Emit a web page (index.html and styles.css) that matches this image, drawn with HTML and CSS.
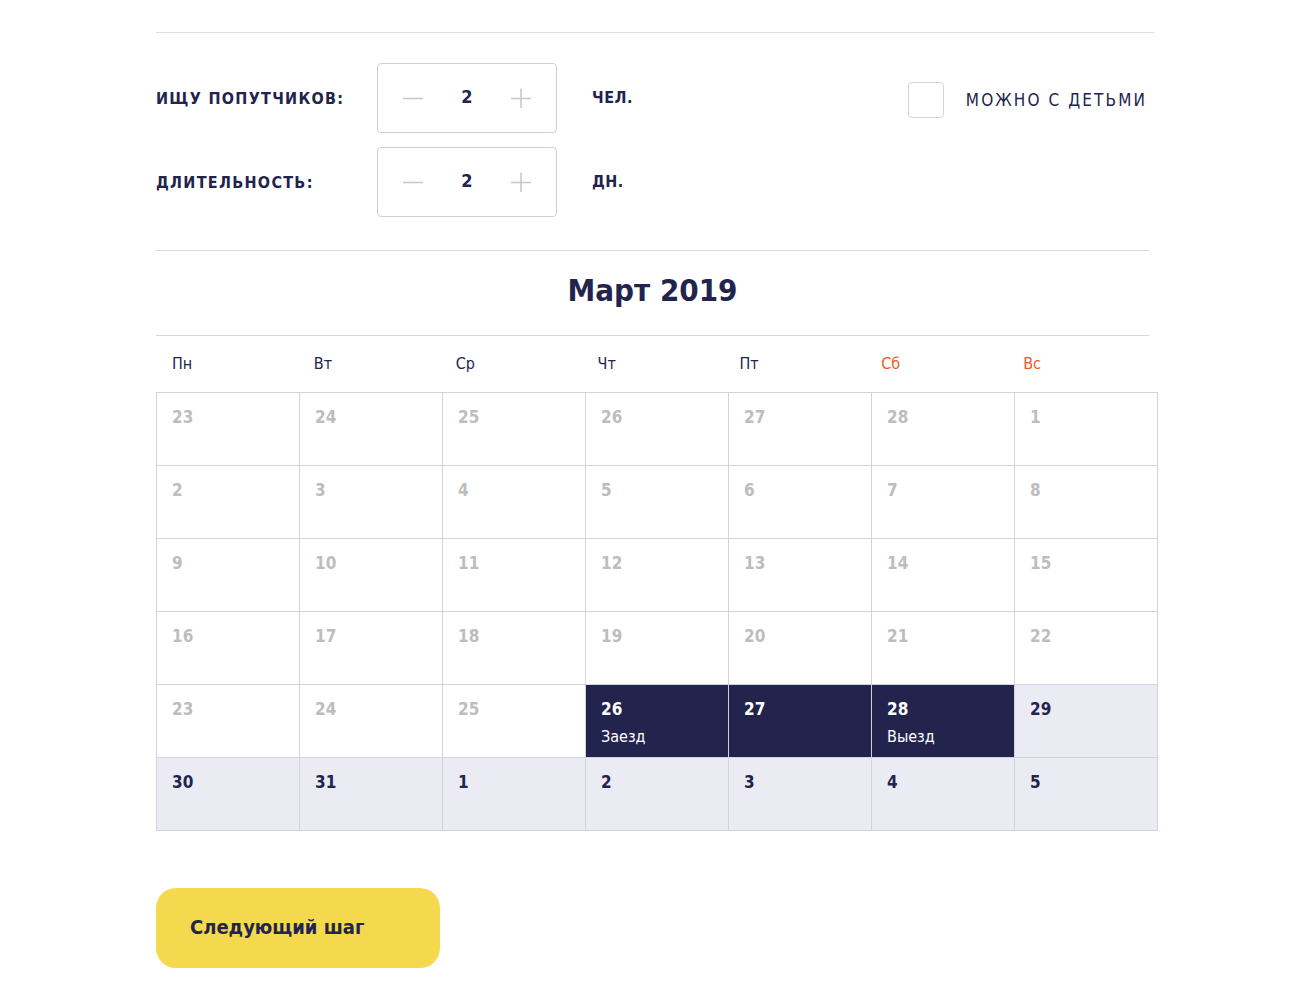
FILE: index.html
```html
<!DOCTYPE html>
<html lang="ru">
<head>
<meta charset="utf-8">
<title>Календарь</title>
<link rel="stylesheet" href="styles.css">
</head>
<body>
<div class="page">
  <div class="rule rule-top"></div>
  <div class="params">
    <div class="param-row">
      <div class="label">Ищу попутчиков:</div>
      <div class="stepper">
        <svg class="ico" width="20" height="20" viewBox="0 0 20 20"><path d="M0 10.5H20" stroke="#c6c6c6" stroke-width="1.5"/></svg>
        <span class="value">2</span>
        <svg class="ico" width="20" height="20" viewBox="0 0 20 20"><path d="M0 10.5H20M10 0.5V20.5" stroke="#c6c6c6" stroke-width="1.5"/></svg>
      </div>
      <div class="unit">чел.</div>
      <label class="check">
        <span class="box"></span>
        <span class="check-text">Можно с детьми</span>
      </label>
    </div>
    <div class="param-row">
      <div class="label">Длительность:</div>
      <div class="stepper">
        <svg class="ico" width="20" height="20" viewBox="0 0 20 20"><path d="M0 10.5H20" stroke="#c6c6c6" stroke-width="1.5"/></svg>
        <span class="value">2</span>
        <svg class="ico" width="20" height="20" viewBox="0 0 20 20"><path d="M0 10.5H20M10 0.5V20.5" stroke="#c6c6c6" stroke-width="1.5"/></svg>
      </div>
      <div class="unit">дн.</div>
    </div>
  </div>
  <div class="rule rule-mid"></div>
  <h1 class="month">Март 2019</h1>
  <div class="rule rule-mid"></div>
  <div class="weekdays">
    <div>Пн</div><div>Вт</div><div>Ср</div><div>Чт</div><div>Пт</div><div class="weekend">Сб</div><div class="weekend">Вс</div>
  </div>
  <div class="grid">
    <div class="cell past">23</div><div class="cell past">24</div><div class="cell past">25</div><div class="cell past">26</div><div class="cell past">27</div><div class="cell past">28</div><div class="cell past">1</div>
    <div class="cell past">2</div><div class="cell past">3</div><div class="cell past">4</div><div class="cell past">5</div><div class="cell past">6</div><div class="cell past">7</div><div class="cell past">8</div>
    <div class="cell past">9</div><div class="cell past">10</div><div class="cell past">11</div><div class="cell past">12</div><div class="cell past">13</div><div class="cell past">14</div><div class="cell past">15</div>
    <div class="cell past">16</div><div class="cell past">17</div><div class="cell past">18</div><div class="cell past">19</div><div class="cell past">20</div><div class="cell past">21</div><div class="cell past">22</div>
    <div class="cell past">23</div><div class="cell past">24</div><div class="cell past">25</div>
    <div class="cell sel">26<span class="note">Заезд</span></div>
    <div class="cell sel">27</div>
    <div class="cell sel">28<span class="note">Выезд</span></div>
    <div class="cell free">29</div>
    <div class="cell free">30</div><div class="cell free">31</div><div class="cell free">1</div><div class="cell free">2</div><div class="cell free">3</div><div class="cell free">4</div><div class="cell free">5</div>
  </div>
  <button class="next">Следующий шаг</button>
</div>
</body>
</html>
```

FILE: styles.css
```css
* { box-sizing: border-box; }
html, body { margin: 0; padding: 0; background: #fff; }
body {
  font-family: "DejaVu Sans Condensed", "DejaVu Sans", sans-serif;
  font-stretch: condensed;
  color: #22244d;
}
.page {
  padding: 32px 0 0 156px;
  width: 1160px;
}
.rule { height: 1px; background: #dcdce6; }
.rule-top { width: 998px; }
.rule-mid { width: 993px; background: #d6d6e2; }

.params {
  padding: 30px 0 33px;
  display: flex;
  flex-direction: column;
  gap: 14px;
  width: 998px;
}
.param-row {
  display: flex;
  align-items: center;
}
.label {
  width: 221px;
  font-size: 16px;
  font-weight: bold;
  letter-spacing: 1.3px;
  text-transform: uppercase;
}
.stepper {
  width: 180px;
  height: 70px;
  border: 1px solid #cfcfd9;
  border-radius: 4px;
  display: flex;
  align-items: center;
  justify-content: space-between;
  padding: 0 25px 0 25px;
}
.ico { display: block; margin-top: -1px; }
.value { font-size: 18px; font-weight: bold; margin-top: -4px; }
.unit {
  margin-left: 35px;
  font-size: 16px;
  font-weight: bold;
  letter-spacing: 0.5px;
  text-transform: uppercase;
  margin-top: -2px;
}
.check {
  margin-left: auto;
  display: flex;
  align-items: center;
  gap: 22px;
  margin-top: 4px;
  margin-right: 7px;
}
.box {
  width: 36px;
  height: 36px;
  border: 1px solid #d3d3de;
  border-radius: 4px;
}
.check-text {
  font-size: 17px;
  letter-spacing: 2.1px;
  text-transform: uppercase;
}

.month {
  margin: 0;
  width: 993px;
  text-align: center;
  font-size: 31px;
  font-weight: bold;
  line-height: 78px;
  padding-bottom: 6px;
}
.weekdays {
  display: grid;
  grid-template-columns: repeat(7, 1fr);
  width: 993px;
  height: 56px;
  align-items: center;
  font-size: 16px;
}
.weekdays div { padding-left: 16px; padding-bottom: 2px; }
.weekdays .weekend { color: #ec5a24; }

.grid {
  display: grid;
  grid-template-columns: repeat(7, 143px);
  grid-auto-rows: 73px;
  width: 1002px;
  border-left: 1px solid #d3d3e0;
  border-top: 1px solid #d3d3e0;
}
.cell {
  border-right: 1px solid #d3d3e0;
  border-bottom: 1px solid #d3d3e0;
  padding: 10px 15px 0;
  font-size: 17px;
  font-weight: bold;
  line-height: 28px;
  display: flex;
  flex-direction: column;
  align-items: flex-start;
}
.cell.past { color: #bdbdbd; }
.cell.free { background: #ebebf4; color: #22244d; }
.cell.sel { background: #22244d; color: #fff; }
.note { font-weight: normal; font-size: 16px; }

.next {
  margin-top: 57px;
  width: 284px;
  height: 80px;
  border: 0;
  border-radius: 20px;
  background: #f4d84e;
  color: #22244d;
  font-family: inherit;
  font-stretch: condensed;
  font-size: 20px;
  font-weight: bold;
  text-align: left;
  padding: 0 0 2px 34px;
  cursor: pointer;
}
```
